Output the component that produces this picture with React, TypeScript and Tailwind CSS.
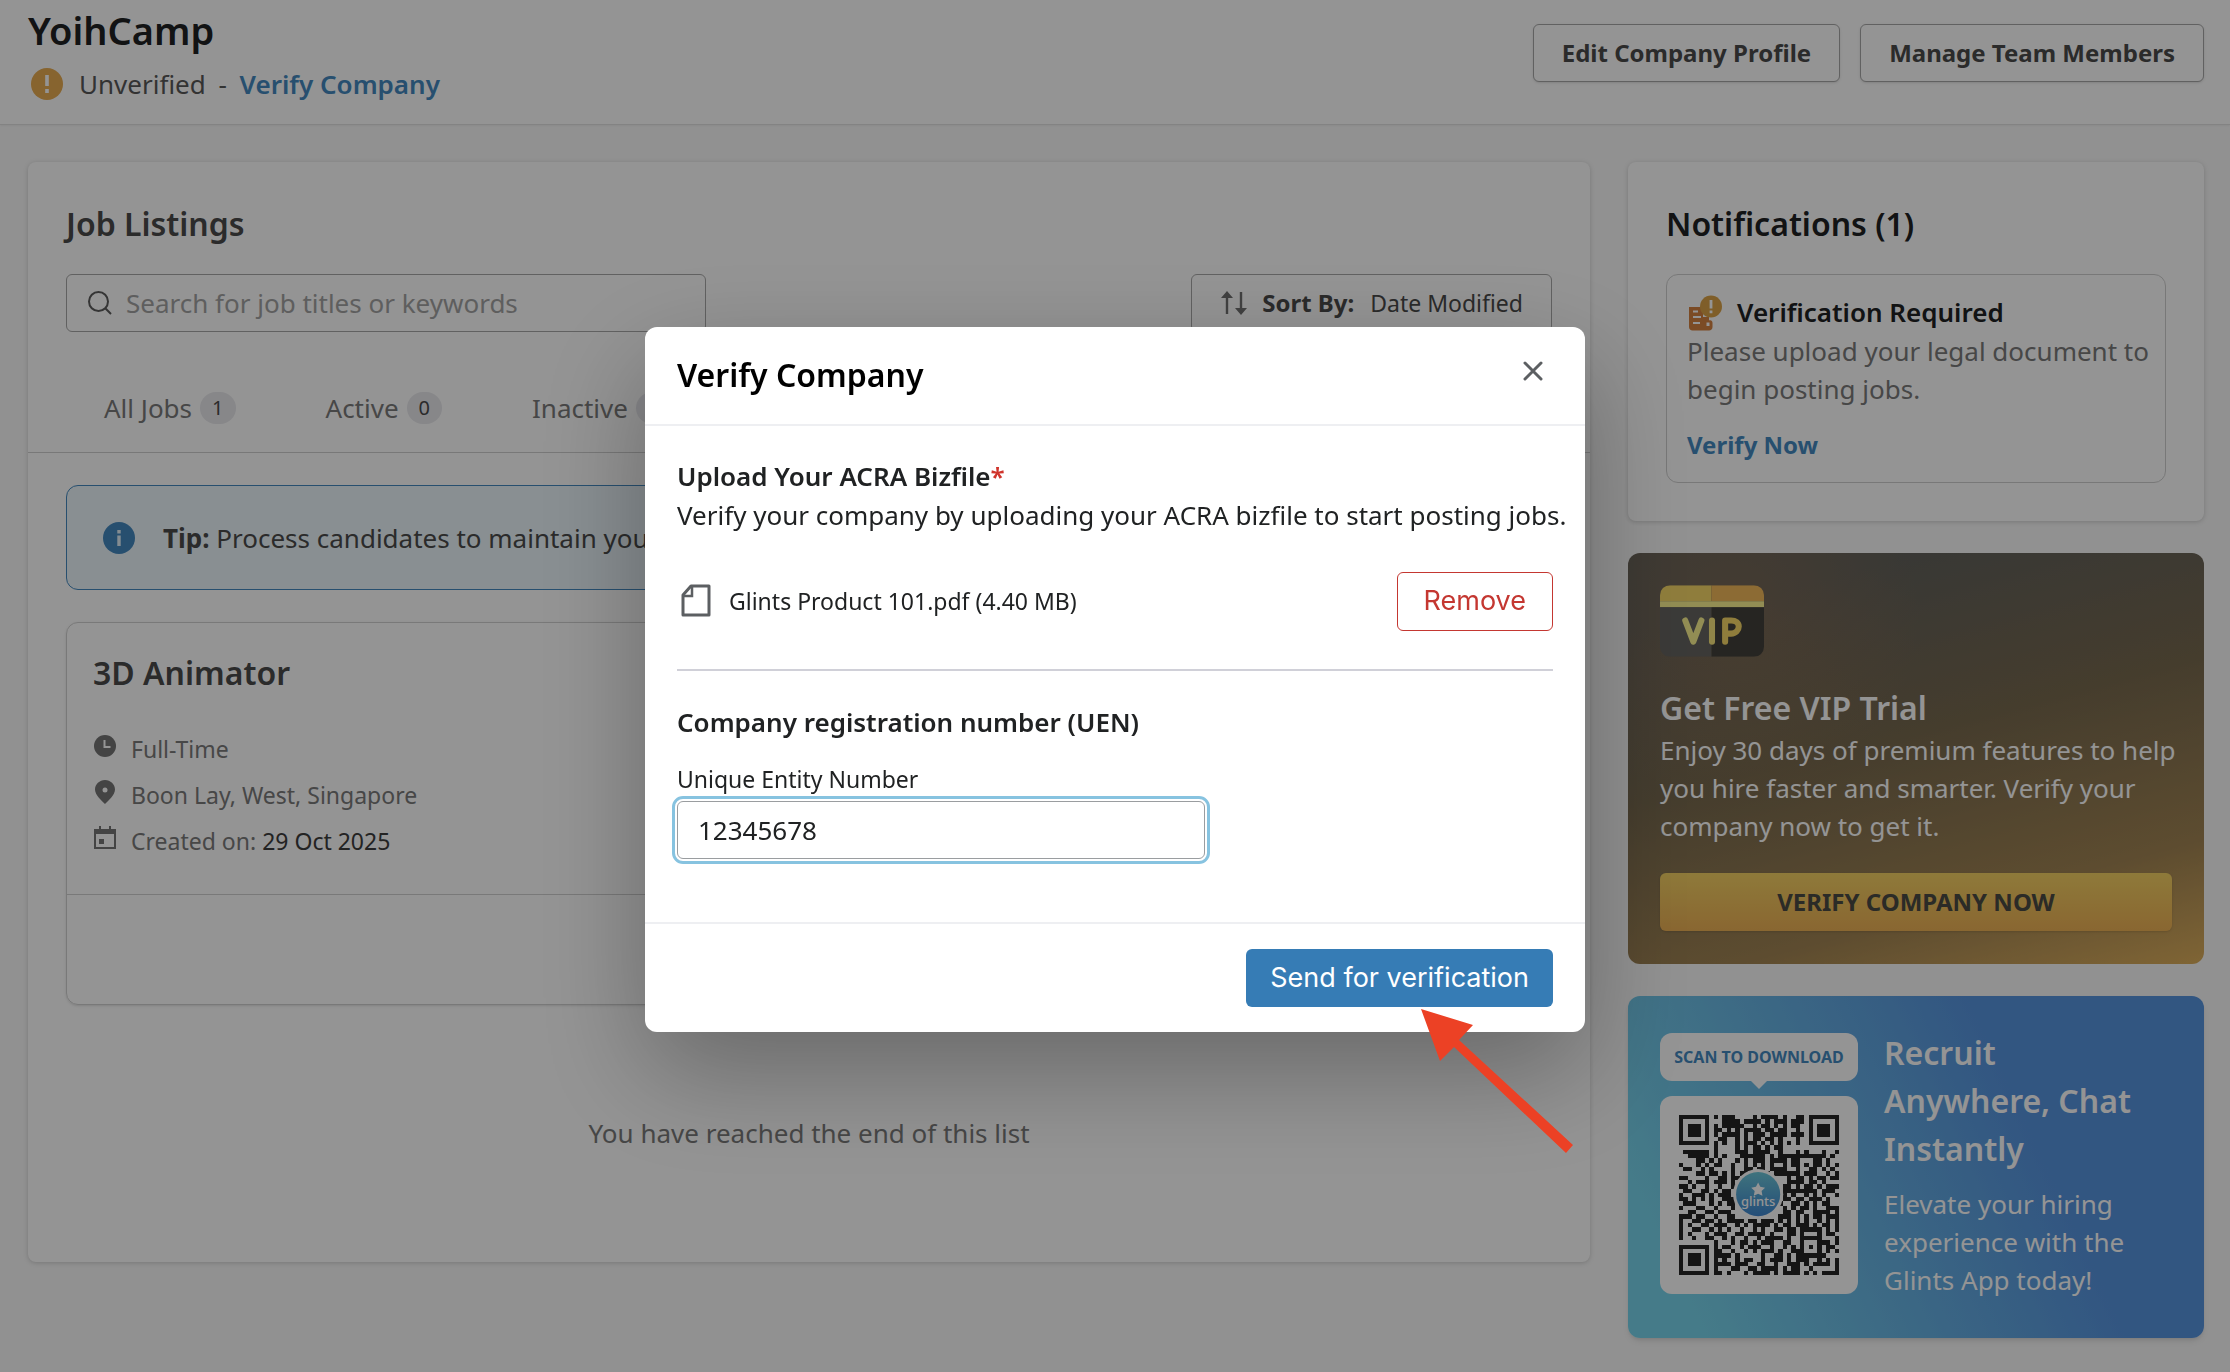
import { useState } from 'react';
import type { ReactNode } from 'react';

// Cols 8-28 of the first eight rows; the finder squares are drawn on their own
const QR_TOP = [
  '#.###....#.####.#..##',
  '..####.####.#.###.###',
  '#.#####..#.##.#.#.##.',
  '##.#.#.####.##.##..#.',
  '#.####.#.###.####.###',
  '.##..#.#.##.##.#...#.',
  '#.#..#.###.#.#.#.#.#.',
  '#....#.#.##.#.##.....',
];

const QR_MIDDLE = [
  '.######.#....###.####..#...#.#...#..#',
  '..#####.#.#...######.#.###########.#.',
  '....##.#.#...#.#.###.####.##...##.#..',
  '#...#.#.##..#..#.#.#.#..#.##.#.##.#.#',
  '.##..#.#....#..##.##.####..#..##.#.#.',
  '....##.##.#.#.##.#.##.######.###..#.#',
  '##....#..##.##...........#.##.#.##.##',
  '..#.###.###.#............####.##.#...',
  '##.#..#..#..##..........##.#.##.#.###',
  '.##..##.#.##............########.###.',
  '#..###.#.###............#.#..#.#.#..#',
  '##.#.#.#..###...........##.##.###.#..',
  '.###...#.#.##..........#..##.#.#.##..',
  '#...##..#...#...........#.#.##.#..###',
  '..##..##.###............##.##..####.#',
  '###.##..#..##..........###.#.#.##.###',
  '#..##.##.#.####.##.###.#.#.#.#..#.#.#',
  '#.#..##.###..#.#.####.#.##.###.#.##.#',
  '#..##..#.#.#..#..#.#..##.##.#####.#.#',
  '#.#...#.###..##.####.#...##.#...#.##.',
  '#..#..##..#.#..#..#.####.#..#####...#',
];

// Cols 8-36 of the last eight rows
const QR_BOTTOM = [
  '#...#.##.#.###..##..#...###.#',
  '#.##..#.###..#..#.#.#.#.#.##.',
  '##..#..#.#.###.#..###...#.#.#',
  '####.#.....#..##.#.#######...',
  '#.#..#.##..#.###.#.###..#.#.#',
  '####.###..##..#..###.#.####.#',
  '#...##..##.####.#.##..#.....#',
  '##.#...#.####.#.####.#.#.####',
];

const QR_ROWS = [
  ...QR_TOP.map((row) => '........' + row),
  ...QR_MIDDLE,
  ...QR_BOTTOM.map((row) => '........' + row),
];

const QR_PATH = QR_ROWS.map((row, y) =>
  row
    .split('')
    .map((cell, x) => (cell === '#' ? `M${x} ${y}h1v1h-1z` : ''))
    .join('')
).join('');

function QrCode() {
  const finders = [
    [0, 0],
    [30, 0],
    [0, 30],
  ];
  return (
    <svg viewBox="0 0 37 37" className="w-40 h-40" role="img" aria-label="QR code">
      <defs>
        <linearGradient id="glints-badge" x1="0" y1="0" x2="0" y2="1">
          <stop offset="0%" stopColor="#6cc6d8" />
          <stop offset="100%" stopColor="#3f86d0" />
        </linearGradient>
      </defs>
      <g shapeRendering="crispEdges" fill="#252525">
        <path d={QR_PATH} />
        {finders.map(([x, y]) => (
          <path
            key={`${x}-${y}`}
            fillRule="evenodd"
            d={`M${x} ${y}h7v7h-7zM${x + 1} ${y + 1}v5h5v-5zM${x + 2} ${y + 2}h3v3h-3z`}
          />
        ))}
      </g>
      <circle cx="18.3" cy="18.3" r="5.8" fill="#fff" />
      <circle cx="18.3" cy="18.3" r="5.1" fill="url(#glints-badge)" />
      <path
        d="M18.3 15.6l.5 1 1.1.2-.8.8.2 1.1-1-.5-1 .5.2-1.1-.8-.8 1.1-.2z"
        fill="#fff"
      />
      <text x="18.3" y="21" textAnchor="middle" fontSize="3" fontWeight="500" fill="#fff" fontFamily="Noto Sans, sans-serif">
        glints
      </text>
    </svg>
  );
}

function WarningIcon() {
  return (
    <svg viewBox="0 0 32 32" className="w-8 h-8 shrink-0">
      <circle cx="16" cy="16" r="16" fill="#e8ac52" />
      <path d="M14.2 7h3.6v11h-3.6zM14.2 21h3.6v4h-3.6z" fill="#fff" />
    </svg>
  );
}

function VerificationIcon() {
  return (
    <svg viewBox="0 0 36 36" className="w-9 h-9 shrink-0">
      <path d="M2 12h14v10h6v3.500c1.800-.8 3.500.2 3.500 2.500v4c0 2-1.500 3.500-3.500 3.500H5.500C3.500 35.500 2 34 2 32z" fill="#d58240" />
      <path d="M6 16.500h5M6 22h8M6 28h7" stroke="#fff" strokeWidth="2.200" />
      <path d="M19.500 27.500h3v3.500h-3z" fill="#fff" />
      <circle cx="24" cy="11.500" r="11" fill="#dba347" />
      <path d="M22.600 5h2.800v8.500h-2.800zM22.600 15.500h2.800v2.800h-2.800z" fill="#fff" />
    </svg>
  );
}

function InfoIcon() {
  return (
    <svg viewBox="0 0 32 32" className="w-8 h-8 shrink-0">
      <circle cx="16" cy="16" r="16" fill="#4489c0" />
      <path d="M14.300 8h3.400v3.400h-3.400zM14.300 13.500h3.400V24h-3.400z" fill="#e4f2fa" />
    </svg>
  );
}

function SearchIcon() {
  return (
    <svg viewBox="0 0 24 24" className="w-6 h-6 shrink-0" fill="none" stroke="#5c5c5c" strokeWidth="2">
      <circle cx="10.500" cy="10.500" r="9.500" />
      <path d="M17.300 17.300L23 23" />
    </svg>
  );
}

function SortIcon() {
  return (
    <svg viewBox="0 0 28 26" className="w-7 h-6.5 shrink-0" fill="#707070">
      <path d="M7 1l6 7H8.200v16H5.800V8H1zM21 25l-6-7h4.800V2h2.400v16H27z" />
    </svg>
  );
}

function VipBadge() {
  return (
    <svg viewBox="0 0 103 71" className="w-26 h-18" role="img" aria-label="VIP">
      <clipPath id="vip-card">
        <rect width="103" height="71" rx="10" />
      </clipPath>
      <g clipPath="url(#vip-card)">
        <path d="M0 0h51v16H0z" fill="#f7d868" />
        <path d="M51 0h52v16H51z" fill="#f2b95a" />
        <path d="M0 16h103v6H0z" fill="#fbf391" />
        <path d="M0 22h51v49H0z" fill="#666561" />
        <path d="M51 22h52v49H51z" fill="#42413b" />
      </g>
      <g fill="none" strokeWidth="6" strokeLinecap="round" strokeLinejoin="round">
        <path d="M25 35l8 21 8-21" stroke="#fbf391" />
        <path d="M51.500 35v21" stroke="#f9e57d" />
        <path d="M64.500 56V35h6c4.500 0 7.500 2.500 7.500 6s-3 7-7.500 7h-6" stroke="#f7d868" />
      </g>
    </svg>
  );
}

function Card({ children, className = '' }: { children: ReactNode; className?: string }) {
  return (
    <section className={`bg-white rounded-lg shadow-[0_1px_5px_rgba(0,0,0,0.18)] ${className}`}>
      {children}
    </section>
  );
}

const tabs = [
  { name: 'All Jobs', count: 1 },
  { name: 'Active', count: 0 },
  { name: 'Inactive', count: 0 },
];

function Header() {
  return (
    <header className="flex justify-between items-start bg-white border-b border-[#e2e2e2] shadow-xs h-[125px] pl-7 pr-[26px]">
      <div>
        <h1 className="text-[38px] leading-[60px] font-semibold text-[#202223]">YoihCamp</h1>
        <div className="flex items-center gap-4 pl-[3px] leading-[48px]">
          <WarningIcon />
          <p className="text-[#595959]">
            Unverified <span className="mx-1.5">-</span>{' '}
            <a href="#verify" className="font-semibold text-[#4489c0]">Verify Company</a>
          </p>
        </div>
      </div>
      <div className="flex gap-5 pt-6">
        <button className="h-[58px] px-7 rounded-md border border-[#a8a8a8] shadow-sm bg-white text-[24px] font-bold text-[#4a4a4a]">
          Edit Company Profile
        </button>
        <button className="h-[58px] px-7 rounded-md border border-[#a8a8a8] shadow-sm bg-white text-[24px] font-bold text-[#4a4a4a]">
          Manage Team Members
        </button>
      </div>
    </header>
  );
}

function JobCard() {
  return (
    <article className="mt-8 rounded-xl border border-[#d0d0d0] shadow-sm">
      <div className="px-[26px] pt-7 pb-[30px] border-b border-[#d0d0d0]">
        <h3 className="text-[32px] leading-[44px] font-semibold text-[#4a4a4a]">3D Animator</h3>
        <ul className="mt-[31px] text-[23px] leading-[46px] text-[#7a7a7a]">
          <li className="flex items-center gap-3.5">
            <svg viewBox="0 0 24 24" className="w-6 h-6 mb-1.5">
              <circle cx="12" cy="12" r="11" fill="#757575" />
              <path d="M11.500 6v7h6" fill="none" stroke="#fff" strokeWidth="2" />
            </svg>
            Full-Time
          </li>
          <li className="flex items-center gap-3.5">
            <svg viewBox="0 0 24 24" className="w-6 h-6 mb-1.5">
              <path d="M12 0c5.500 0 10 4.300 10 9.500C22 15 15 21 12 24 9 21 2 15 2 9.500 2 4.300 6.500 0 12 0z" fill="#757575" />
              <circle cx="12" cy="10" r="2.500" fill="#fff" />
            </svg>
            Boon Lay, West, Singapore
          </li>
          <li className="flex items-center gap-3.5">
            <svg viewBox="0 0 24 24" className="w-6 h-6 mb-1.5" fill="none" stroke="#757575" strokeWidth="2">
              <path d="M2 4h20v18H2zM7 0v4M17 0v4" />
              <path d="M2 6h20" strokeWidth="4" />
              <path d="M6 13h5v5H6z" fill="#757575" stroke="none" />
            </svg>
            <span>
              Created on: <span className="text-[#3d3d3d]">29 Oct 2025</span>
            </span>
          </li>
        </ul>
      </div>
      <div className="h-[109px]" />
    </article>
  );
}

function JobListings() {
  return (
    <Card className="flex-1 min-w-0 pb-[109px]">
      <div className="px-[38px] pt-[39px]">
        <h2 className="text-[32px] leading-[46px] font-semibold text-[#4a4a4a]">Job Listings</h2>
        <div className="flex justify-between mt-[27px]">
          <label className="flex items-center gap-3.5 w-[640px] h-[58px] px-[21px] rounded-md border border-[#a8a8a8]">
            <SearchIcon />
            <input
              aria-label="Search jobs"
              placeholder="Search for job titles or keywords"
              className="flex-1 min-w-0 outline-none placeholder:text-[#a3a3a3]"
            />
          </label>
          <button className="flex items-center h-[58px] px-7 rounded-md border border-[#a8a8a8] text-[#4a4a4a] text-[23px]">
            <SortIcon />
            <b className="ml-3.5 mr-4 text-[24px]">Sort By:</b> Date Modified
          </button>
        </div>
      </div>
      <nav className="flex gap-[90px] pl-19 mt-13 pb-5 border-b border-[#cfcfcf]">
        {tabs.map((tab) => (
          <button key={tab.name} className="flex items-center gap-2 leading-[48px] text-[#7a7a7a]">
            {tab.name}
            <span className="px-3 rounded-full bg-[#e9e9ed] text-xl leading-8 text-[#4a4a4a]">{tab.count}</span>
          </button>
        ))}
      </nav>
      <div className="px-[38px] pt-8">
        <div className="flex items-center gap-7 h-[105px] px-9 rounded-xl border border-[#4489c0] bg-[#ecf6fb] text-[#4a4a4a]">
          <InfoIcon />
          <p>
            <b>Tip:</b> Process candidates to maintain your
          </p>
        </div>
        <JobCard />
        <p className="mt-[108px] text-center leading-[40px] text-[#7a7a7a]">You have reached the end of this list</p>
      </div>
    </Card>
  );
}

function Sidebar() {
  return (
    <aside className="w-[576px] shrink-0 flex flex-col gap-8">
      <Card className="px-[38px] pt-[39px] pb-[38px]">
        <h2 className="text-[32px] leading-[46px] font-semibold text-[#202223]">Notifications (1)</h2>
        <div className="mt-[27px] pl-5 pr-2 pt-[18px] pb-4 rounded-xl border border-[#cfcfcf]">
          <div className="flex items-center gap-3.5">
            <VerificationIcon />
            <h3 className="leading-[39px] font-semibold text-[#202223]">Verification Required</h3>
          </div>
          <p className="text-[#7a7a7a]">Please upload your legal document to begin posting jobs.</p>
          <a href="#verify" className="block mt-4 text-[24px] leading-[42px] font-bold text-[#4489c0]">Verify Now</a>
        </div>
      </Card>

      <section className="rounded-xl pl-8 pr-6 pt-8 pb-[33px] text-white bg-[radial-gradient(circle_at_18%_15%,rgba(170,120,70,0.3),transparent_32%),linear-gradient(165deg,#62615c_14%,#77694f_45%,#a18453_78%,#dcae5c)]">
        <VipBadge />
        <h2 className="mt-7 text-[32px] leading-[46px] font-semibold">Get Free VIP Trial</h2>
        <p>Enjoy 30 days of premium features to help you hire faster and smarter. Verify your company now to get it.</p>
        <div className="mt-7 pr-2">
          <button className="w-full h-[58px] rounded-md shadow-sm bg-linear-to-b from-[#f5d264] to-[#edb155] text-[24px] font-bold text-[#4a4a44]">
            VERIFY COMPANY NOW
          </button>
        </div>
      </section>

      <section className="flex gap-[26px] rounded-xl px-8 pt-[33px] pb-[39px] shadow-md text-white bg-[linear-gradient(65deg,#78d5ec_10%,#68b5e4_38%,#5794df_68%)]">
        <div className="shrink-0 pt-1">
          <p className="relative rounded-xl bg-white text-center text-base leading-[48px] w-[198px] font-bold text-[#4489c0]">
            SCAN TO DOWNLOAD
            <span className="absolute left-1/2 top-full -translate-x-1/2 border-x-8 border-t-8 border-x-transparent border-t-white" />
          </p>
          <div className="mt-[15px] rounded-xl bg-white p-[19px]">
            <QrCode />
          </div>
        </div>
        <div>
          <h2 className="pr-5 text-[32px] leading-[48px] font-semibold">Recruit Anywhere, Chat Instantly</h2>
          <p className="mt-3">Elevate your hiring experience with the Glints App today!</p>
        </div>
      </section>
    </aside>
  );
}

function VerifyModal() {
  const [uen, setUen] = useState('12345678');

  return (
    <div className="fixed inset-0 z-10 flex items-center justify-center pb-3.5 bg-black/42">
      <div role="dialog" aria-labelledby="modal-title" className="w-[940px] rounded-xl bg-white shadow-[0_40px_110px_rgba(0,0,0,0.3)]">
        <div className="flex items-center justify-between h-[99px] px-8 border-b-2 border-[#eeeff2]">
          <h2 id="modal-title" className="text-[32px] font-semibold text-black">Verify Company</h2>
          <button aria-label="Close" className="p-2.5 mb-2">
            <svg viewBox="0 0 20 20" className="w-5 h-5" stroke="#5c5f62" strokeWidth="3" strokeLinecap="round">
              <path d="M2 2l16 16M18 2L2 18" />
            </svg>
          </button>
        </div>

        <div className="px-8 pt-[30px] pb-[63px] text-[#202223]">
          <h3 className="leading-[40px] font-semibold">
            Upload Your ACRA Bizfile<span className="text-[#d0342c]">*</span>
          </h3>
          <p className="whitespace-nowrap">Verify your company by uploading your ACRA bizfile to start posting jobs.</p>
          <div className="flex items-center mt-[38px] pb-[38px] border-b-2 border-[#d0d0d8]">
            <svg viewBox="0 0 36 36" className="w-9 h-9 mr-4" fill="none" stroke="#5c5f62" strokeWidth="3">
              <path d="M14 3h18v29H6V12z" strokeLinejoin="round" />
              <path d="M15 4v9H7" strokeWidth="2.500" />
            </svg>
            <span className="flex-1 text-[23px]">Glints Product 101.pdf (4.40 MB)</span>
            <button className="h-[59px] px-[26px] rounded-md border border-[#c43731] text-[27px] text-[#c43731] font-[Inter,sans-serif]">
              Remove
            </button>
          </div>
          <h3 className="mt-[31px] leading-[40px] font-semibold">Company registration number (UEN)</h3>
          <label htmlFor="uen" className="block mt-5 text-[23px] leading-[34px]">Unique Entity Number</label>
          <input
            id="uen"
            value={uen}
            onChange={(e) => setUen(e.target.value)}
            className="block w-[528px] h-[58px] mt-[5px] px-5 rounded-md border border-[#9a9da0] outline-3 outline-offset-2 outline-[#87c3e0]"
          />
        </div>

        <div className="flex justify-end px-8 py-[25px] border-t-2 border-[#eeeff2]">
          <div className="relative">
            <button className="h-[58px] px-6 rounded-md bg-[#367cb5] text-[27px] text-white font-[Inter,sans-serif]">
              Send for verification
            </button>
            {/* Pointer to the submit button */}
            <svg viewBox="0 0 152 144" className="absolute top-15 -right-5 w-[152px] h-36" fill="#ec4125">
              <path d="M0 0l52 16-14 15 114 105-7 8L33 38 19 52z" />
            </svg>
          </div>
        </div>
      </div>
    </div>
  );
}

export default function App() {
  return (
    <div className="min-h-screen bg-[#fafafa] font-['Noto_Sans',sans-serif] text-[26px] leading-[38px]">
      <Header />
      <main className="flex items-start gap-[38px] pl-7 pr-[26px] pt-[37px] pb-8">
        <JobListings />
        <Sidebar />
      </main>
      <VerifyModal />
    </div>
  );
}
